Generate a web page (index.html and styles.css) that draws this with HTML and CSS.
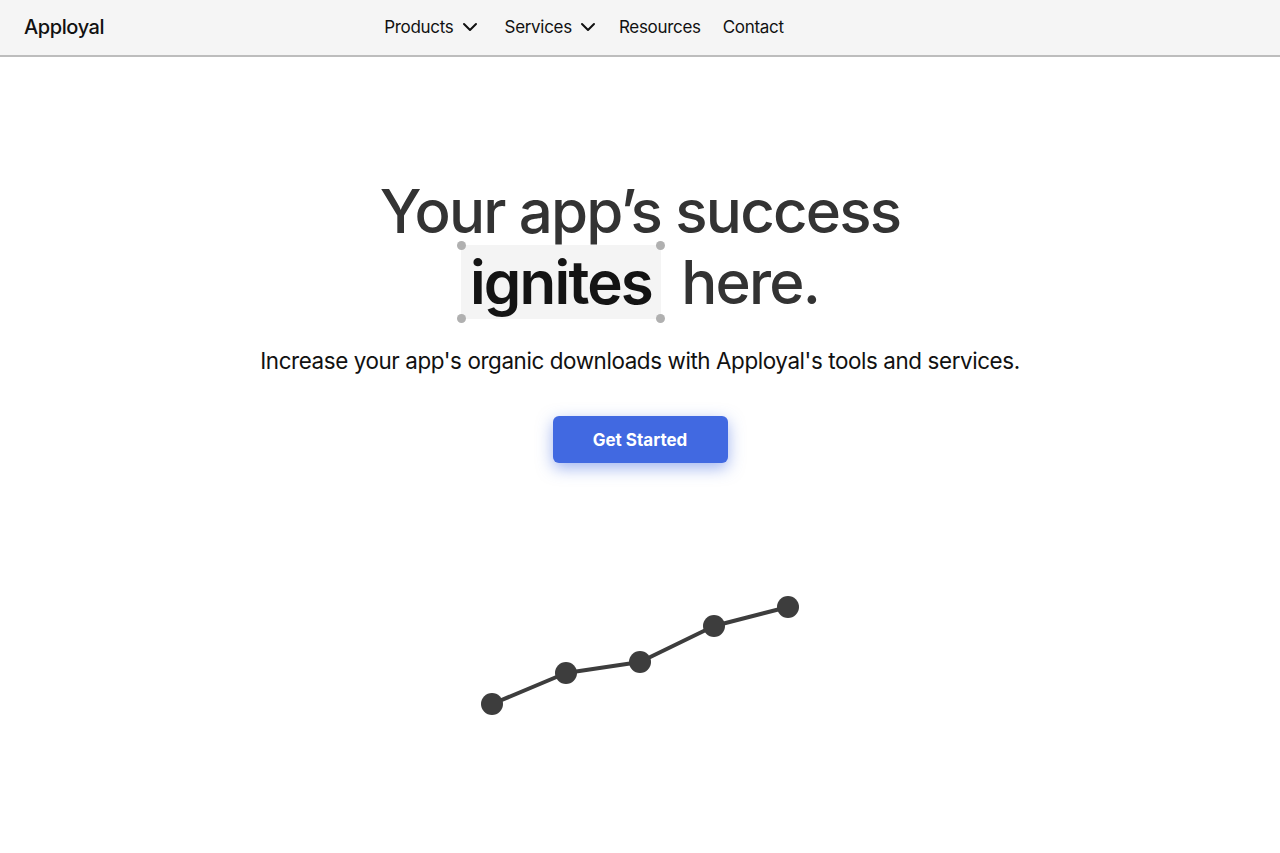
FILE: index.html
```html
<!DOCTYPE html>
<html lang="en">
<head>
<meta charset="utf-8">
<title>Apployal</title>
<link rel="stylesheet" href="styles.css">
</head>
<body>
<header class="topbar">
  <div class="logo">Apployal</div>
  <nav class="nav">
    <a class="nav-item">Products <svg class="chev" viewBox="0 0 18 18" width="18" height="18"><path d="M3 6l6 6 6-6" fill="none" stroke="#111" stroke-width="2" stroke-linecap="round" stroke-linejoin="round"/></svg></a>
    <a class="nav-item">Services <svg class="chev" viewBox="0 0 18 18" width="18" height="18"><path d="M3 6l6 6 6-6" fill="none" stroke="#111" stroke-width="2" stroke-linecap="round" stroke-linejoin="round"/></svg></a>
    <a class="nav-item">Resources</a>
    <a class="nav-item">Contact</a>
  </nav>
</header>
<main class="hero">
  <h1 class="headline">Your app’s success<br><span class="sel">ignites<i class="dot tl"></i><i class="dot tr"></i><i class="dot bl"></i><i class="dot br"></i></span> here.</h1>
  <p class="sub">Increase your app's organic downloads with Apployal's tools and services.</p>
  <a class="cta">Get Started</a>
  <svg class="chart" width="340" height="130" viewBox="470 590 340 130">
    <polyline points="492,704 566,673 640,662 714,626 788,607" fill="none" stroke="#3d3d3d" stroke-width="4" stroke-linejoin="round"/>
    <g fill="#3d3d3d">
      <circle cx="492" cy="704" r="11"/>
      <circle cx="566" cy="673" r="11"/>
      <circle cx="640" cy="662" r="11"/>
      <circle cx="714" cy="626" r="11"/>
      <circle cx="788" cy="607" r="11"/>
    </g>
  </svg>
</main>
</body>
</html>
```
FILE: styles.css
```css
* { box-sizing: border-box; }
html, body { margin: 0; padding: 0; background: #fff; }
body { font-family: "Inter", "Noto Sans", sans-serif; color: #111; }

.topbar {
  height: 57px;
  background: #f5f5f5;
  border-bottom: 2px solid #bdbdbd;
  display: flex;
  align-items: center;
  padding: 0 24px 2px;
}
.logo {
  font-size: 20px;
  font-weight: 500;
  letter-spacing: -0.4px;
  color: #111;
}
.nav {
  display: flex;
  align-items: center;
  gap: 22px;
  margin-left: 280px;
}
.nav-item {
  font-size: 17px;
  color: #111;
  display: flex;
  align-items: center;
  gap: 7px;
  letter-spacing: -0.3px;
}
.nav-item:nth-child(2) { margin-left: 4px; }
.chev { display: block; }

.hero {
  display: flex;
  flex-direction: column;
  align-items: center;
  padding-top: 120px;
}
.headline {
  margin: 0;
  text-align: center;
  font-size: 60px;
  font-weight: 500;
  line-height: 68px;
  color: #333;
  letter-spacing: -1.8px;
}
.sel {
  position: relative;
  display: inline-block;
  background: #f4f4f4;
  color: #141414;
  font-weight: 600;
  padding: 3px 9px;
  line-height: 68px;
  margin-right: 6px;
}
.dot {
  position: absolute;
  width: 9px;
  height: 9px;
  border-radius: 50%;
  background: #b0b0b0;
}
.tl { left: -4px; top: -4px; }
.tr { right: -4px; top: -4px; }
.bl { left: -4px; bottom: -4px; }
.br { right: -4px; bottom: -4px; }

.sub {
  margin: 28px 0 0;
  font-size: 22.4px;
  color: #111;
  letter-spacing: -0.4px;
}
.cta {
  margin-top: 42px;
  width: 175px;
  height: 47px;
  display: flex;
  align-items: center;
  justify-content: center;
  background: #4169e1;
  color: #fff;
  border-radius: 6px;
  font-size: 17px;
  font-weight: 700;
  box-shadow: 0 5px 16px rgba(65, 105, 225, 0.5);
}
.chart {
  margin-top: 127px;
  display: block;
}
```
